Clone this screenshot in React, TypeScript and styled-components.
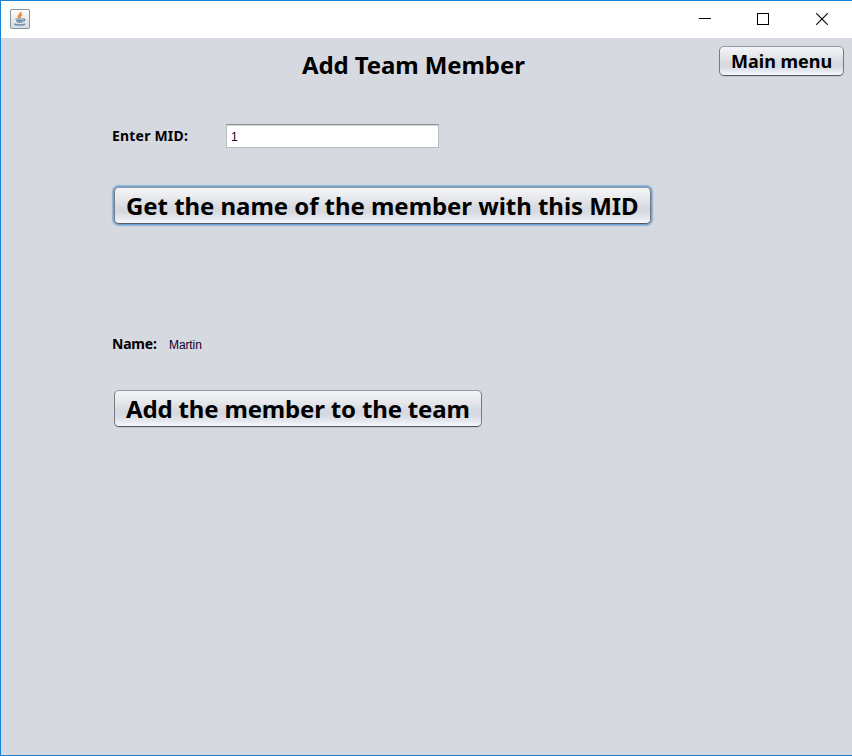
import React from "react";
import styled, { createGlobalStyle } from "styled-components";

const GlobalStyle = createGlobalStyle`
  * { box-sizing: border-box; }
  html, body { margin: 0; padding: 0; }
  body { overflow: hidden; }
`;

const Window = styled.div`
  width: 852px;
  height: 756px;
  display: flex;
  flex-direction: column;
  background: #d6d9df;
  border: solid #1883d7;
  border-width: 1px 0 1px 1px;
  font-family: "Noto Sans", "DejaVu Sans", sans-serif;
  color: #000;
`;

const TitleBar = styled.header`
  height: 37px;
  flex: none;
  display: flex;
  justify-content: space-between;
  background: #fff;
`;

const AppIcon = styled.svg`
  width: 20px;
  height: 20px;
  margin: 8px 0 0 9px;
`;

const Controls = styled.div`
  display: flex;
  padding-right: 1px;
`;

const ControlButton = styled.button`
  width: 58.5px;
  height: 36px;
  padding: 0;
  border: 0;
  background: transparent;
  display: flex;
  justify-content: center;
  align-items: center;
`;

const Header = styled.div`
  display: grid;
  grid-template-columns: 301px 417px 125px;
  align-items: start;
  padding-top: 8px;
  height: 86px;
`;

const Title = styled.h1`
  grid-column: 2;
  margin: 2px 0 0;
  font-size: 24px;
  line-height: 34px;
  letter-spacing: -0.1px;
  font-weight: 700;
  white-space: nowrap;
`;

const NimbusButton = styled.button<{ $width: number; $height: number; $size: number; $spacing: number; $focused?: boolean }>`
  width: ${(p) => p.$width}px;
  height: ${(p) => p.$height}px;
  display: flex;
  align-items: center;
  padding: 0 0 1px 11px;
  border: 1px solid;
  border-color: #95989e #777a80 #55585e #777a80;
  border-radius: 5px;
  background: linear-gradient(#f4f5f7 0%, #e6e8ec 30%, #d7dae0 55%, #d6d9df 68%, #e6e9ef 87%, #f5f8fe 100%);
  box-shadow: ${(p) => (p.$focused ? "0 0 0 1px #73a4d1, 0 0 1px 1.5px #8fb4d8" : "0 1px 0 #c3c6cc")};
  font-family: inherit;
  font-size: ${(p) => p.$size}px;
  letter-spacing: ${(p) => p.$spacing}px;
  font-weight: 700;
  color: #000;
  white-space: nowrap;
`;

const Form = styled.main`
  display: flex;
  flex-direction: column;
  align-items: flex-start;
  padding-left: 111px;
`;

const Row = styled.div<{ $top?: number }>`
  display: flex;
  align-items: center;
  height: 24px;
  margin-top: ${(p) => p.$top ?? 0}px;
`;

const Label = styled.label<{ $width: number; $spacing: number }>`
  width: ${(p) => p.$width}px;
  font-size: 14px;
  line-height: 24px;
  font-weight: 700;
  letter-spacing: ${(p) => p.$spacing}px;
  white-space: nowrap;
`;

const Field = styled.input`
  width: 213px;
  height: 24px;
  padding: 2px 4px 0;
  border: 1px solid #b9bbbf;
  border-top-color: #8d8e91;
  border-radius: 0;
  outline: none;
  background: #fff;
  box-shadow: inset 0 1px 0 #d5d6d8;
  font: 12px "Liberation Sans", Arial, sans-serif;
  color: #10002c;
`;

const NameValue = styled.output`
  padding-top: 1px;
  font: 12px "Liberation Sans", Arial, sans-serif;
  letter-spacing: -0.1px;
  color: #10002c;
`;

const Action = styled.div<{ $top: number }>`
  margin: ${(p) => p.$top}px 0 0 2px;
`;

const JavaCup = () => (
  <AppIcon viewBox="0 0 20 20">
    <defs>
      <linearGradient id="tile" x1="0" y1="0" x2="0" y2="1">
        <stop offset="0" stopColor="#fdfdfd" />
        <stop offset="1" stopColor="#d5dbe0" />
      </linearGradient>
    </defs>
    <rect x="0.5" y="0.5" width="19" height="19" rx="1.5" fill="url(#tile)" stroke="#8596a3" />
    <path d="M10.800 3c.8 2-3.400 2.900-2.200 5.400.3.6.9 1 1.300 1.200M12 5.400c-1.800.8-2.600 1.700-1.300 3.200" fill="none" stroke="#e9873f" strokeWidth="1.600" />
    <path d="M5.500 10h8M6 11.600h7M7 13.200h5.200M13.300 10c2.300-.3 2 2-.5 2.300" fill="none" stroke="#6788a5" strokeWidth="1.200" />
    <path d="M4.300 15c2.500 1.400 8.300 1.300 10.800 0" fill="none" stroke="#6c8ca8" strokeWidth="1.500" />
  </AppIcon>
);

export default function App() {
  return (
    <>
      <GlobalStyle />
      <Window>
        <TitleBar>
          <JavaCup />
          <Controls>
            <ControlButton aria-label="Minimize">
              <svg width="12" height="12" shapeRendering="crispEdges"><path d="M0 5.500h12" stroke="#000" /></svg>
            </ControlButton>
            <ControlButton aria-label="Maximize">
              <svg width="12" height="12" shapeRendering="crispEdges"><rect x=".5" y=".5" width="11" height="11" fill="none" stroke="#000" /></svg>
            </ControlButton>
            <ControlButton aria-label="Close">
              <svg width="12" height="12"><path d="M.2.2l11.600 11.600M11.800.2L.2 11.800" stroke="#000" strokeWidth="1.100" /></svg>
            </ControlButton>
          </Controls>
        </TitleBar>
        <Header>
          <Title>Add Team Member</Title>
          <NimbusButton $width={125} $height={30} $size={18} $spacing={0}>Main menu</NimbusButton>
        </Header>
        <Form>
          <Row>
            <Label $width={114} $spacing={0.2} htmlFor="mid">Enter MID:</Label>
            <Field id="mid" defaultValue="1" />
          </Row>
          <Action $top={39}>
            <NimbusButton $width={537} $height={37} $size={24} $spacing={-0.05} $focused>
              Get the name of the member with this MID
            </NimbusButton>
          </Action>
          <Row $top={108}>
            <Label $width={57} $spacing={-0.2}>Name:</Label>
            <NameValue>Martin</NameValue>
          </Row>
          <Action $top={34}>
            <NimbusButton $width={368} $height={37} $size={24} $spacing={-0.17}>
              Add the member to the team
            </NimbusButton>
          </Action>
        </Form>
      </Window>
    </>
  );
}
